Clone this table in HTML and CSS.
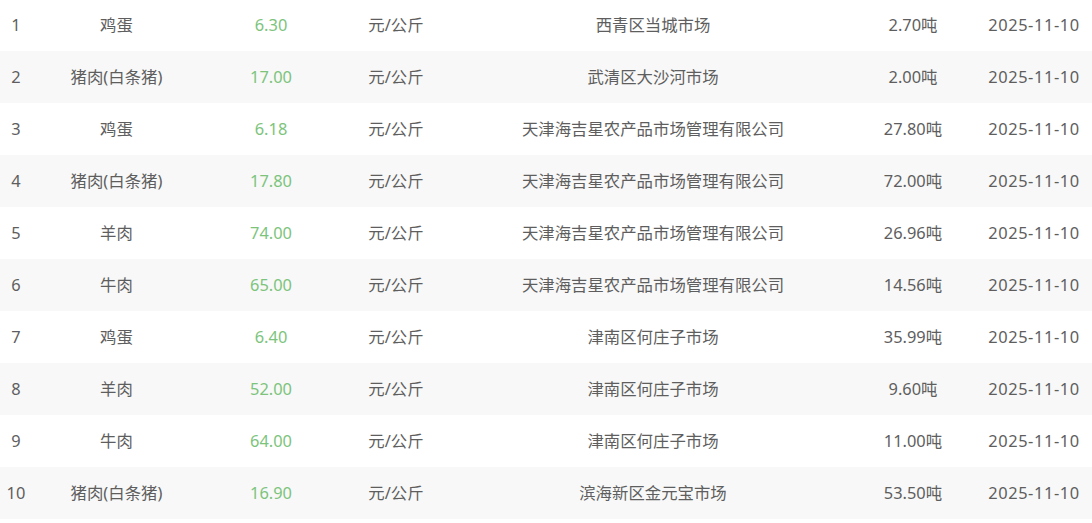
FILE: index.html
```html
<!DOCTYPE html>
<html lang="zh-CN">
<head>
<meta charset="utf-8">
<title>价格表</title>
<link rel="stylesheet" href="styles.css">
</head>
<body>
<div class="table">
  <div class="row"><div class="c idx">1</div><div class="c">鸡蛋</div><div class="c price">6.30</div><div class="c">元/公斤</div><div class="c">西青区当城市场</div><div class="c">2.70吨</div><div class="c date">2025-11-10</div></div>
  <div class="row"><div class="c idx">2</div><div class="c">猪肉(白条猪)</div><div class="c price">17.00</div><div class="c">元/公斤</div><div class="c">武清区大沙河市场</div><div class="c">2.00吨</div><div class="c date">2025-11-10</div></div>
  <div class="row"><div class="c idx">3</div><div class="c">鸡蛋</div><div class="c price">6.18</div><div class="c">元/公斤</div><div class="c">天津海吉星农产品市场管理有限公司</div><div class="c">27.80吨</div><div class="c date">2025-11-10</div></div>
  <div class="row"><div class="c idx">4</div><div class="c">猪肉(白条猪)</div><div class="c price">17.80</div><div class="c">元/公斤</div><div class="c">天津海吉星农产品市场管理有限公司</div><div class="c">72.00吨</div><div class="c date">2025-11-10</div></div>
  <div class="row"><div class="c idx">5</div><div class="c">羊肉</div><div class="c price">74.00</div><div class="c">元/公斤</div><div class="c">天津海吉星农产品市场管理有限公司</div><div class="c">26.96吨</div><div class="c date">2025-11-10</div></div>
  <div class="row"><div class="c idx">6</div><div class="c">牛肉</div><div class="c price">65.00</div><div class="c">元/公斤</div><div class="c">天津海吉星农产品市场管理有限公司</div><div class="c">14.56吨</div><div class="c date">2025-11-10</div></div>
  <div class="row"><div class="c idx">7</div><div class="c">鸡蛋</div><div class="c price">6.40</div><div class="c">元/公斤</div><div class="c">津南区何庄子市场</div><div class="c">35.99吨</div><div class="c date">2025-11-10</div></div>
  <div class="row"><div class="c idx">8</div><div class="c">羊肉</div><div class="c price">52.00</div><div class="c">元/公斤</div><div class="c">津南区何庄子市场</div><div class="c">9.60吨</div><div class="c date">2025-11-10</div></div>
  <div class="row"><div class="c idx">9</div><div class="c">牛肉</div><div class="c price">64.00</div><div class="c">元/公斤</div><div class="c">津南区何庄子市场</div><div class="c">11.00吨</div><div class="c date">2025-11-10</div></div>
  <div class="row"><div class="c idx">10</div><div class="c">猪肉(白条猪)</div><div class="c price">16.90</div><div class="c">元/公斤</div><div class="c">滨海新区金元宝市场</div><div class="c">53.50吨</div><div class="c date">2025-11-10</div></div>
</div>
</body>
</html>
```

FILE: styles.css
```css
html, body {
  margin: 0;
  padding: 0;
  background: #ffffff;
}
body {
  font-family: "Noto Sans", "Noto Sans CJK SC", sans-serif;
  font-size: 16.4px;
  color: #5e5e5e;
}
.table {
  display: flex;
  flex-direction: column;
  margin-top: -1px;
}
.row {
  display: grid;
  grid-template-columns: 32px 169px 140px 110px 404px 116px 121px;
  height: 52px;
  box-sizing: border-box;
  padding-bottom: 2px;
  align-items: center;
  background: #ffffff;
}
.row:nth-child(even) {
  background: #f8f8f8;
}
.c {
  text-align: center;
  white-space: nowrap;
}
.price {
  color: #7cc47c;
}
.date {
  padding-left: 5px;
  letter-spacing: 0.6px;
}
```
